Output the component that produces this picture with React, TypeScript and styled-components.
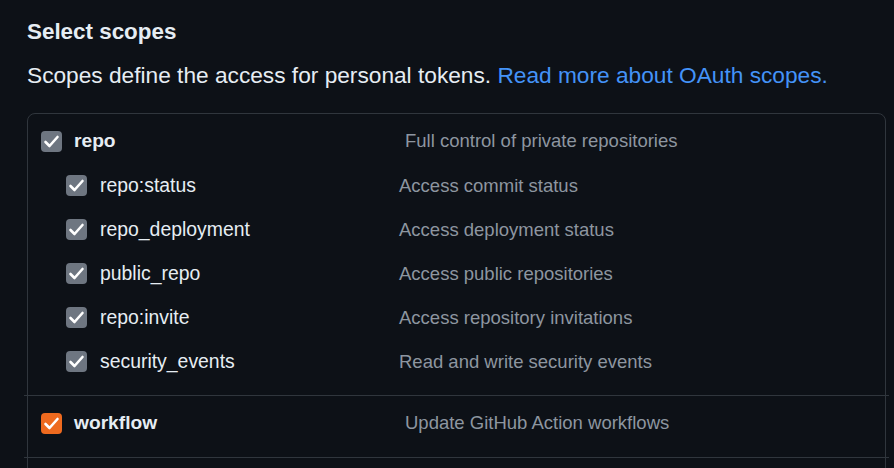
import React from "react";
import styled, { createGlobalStyle } from "styled-components";

const GlobalStyle = createGlobalStyle`
  html, body {
    margin: 0;
    background: #0d1117;
  }
  body {
    font-family: "Liberation Sans", Arial, sans-serif;
    color: #e6edf3;
  }
`;

const Page = styled.div`
  padding: 17px 8px 0 27px;
  height: 468px;
  overflow: hidden;
  box-sizing: border-box;
`;

const Title = styled.h2`
  margin: 0;
  font-size: 22.4px;
  line-height: 30px;
  font-weight: 700;
  color: #e6edf3;
`;

const Intro = styled.p`
  margin: 13px 0 0;
  font-size: 22.7px;
  line-height: 30px;
  color: #e6edf3;
  white-space: nowrap;
`;

const Link = styled.a`
  color: #4493f8;
  text-decoration: none;
`;

const ScopeBox = styled.div`
  margin-top: 23px;
  border: 1px solid #30363d;
  border-radius: 8px;
  padding-bottom: 40px;
`;

const Group = styled.div`
  display: flex;
  flex-direction: column;
  gap: 22px;
  padding: 16px 0 23px 13px;
`;

const Divider = styled.div`
  height: 1px;
  background: #30363d;
  margin: 0 -4px;
`;

const Row = styled.div<{ $nested?: boolean }>`
  display: grid;
  grid-template-columns: ${(p) => (p.$nested ? "333px" : "364px")} 1fr;
  align-items: center;
  height: 22px;
  padding-left: ${(p) => (p.$nested ? "25px" : "0")};
`;

const Label = styled.label<{ $strong?: boolean }>`
  display: flex;
  align-items: center;
  gap: ${(p) => (p.$strong ? "12px" : "13px")};
  font-size: ${(p) => (p.$strong ? "19.2px" : "19.4px")};
  font-weight: ${(p) => (p.$strong ? 700 : 400)};
  color: #e6edf3;
`;

const Box = styled.span<{ $accent?: boolean }>`
  display: inline-flex;
  align-items: center;
  justify-content: center;
  width: 21px;
  height: 21px;
  border-radius: 4px;
  background: ${(p) => (p.$accent ? "#ee6a1f" : "#6e7681")};
  flex-shrink: 0;
`;

const Description = styled.span`
  font-size: 18.5px;
  color: #8d96a0;
`;

const Check = ({ accent }: { accent?: boolean }) => (
  <Box $accent={accent}>
    <svg width="21" height="21" viewBox="0 0 21 21" fill="none">
      <path
        d="M4.5 11 L8.5 15 L16.5 6"
        stroke="#fff"
        strokeWidth="2.6"
        strokeLinecap="round"
        strokeLinejoin="round"
      />
    </svg>
  </Box>
);

type Scope = { name: string; description: string };

const repoScopes: Scope[] = [
  { name: "repo:status", description: "Access commit status" },
  { name: "repo_deployment", description: "Access deployment status" },
  { name: "public_repo", description: "Access public repositories" },
  { name: "repo:invite", description: "Access repository invitations" },
  { name: "security_events", description: "Read and write security events" },
];

export default function App() {
  return (
    <>
      <GlobalStyle />
      <Page>
        <Title>Select scopes</Title>
        <Intro>
          Scopes define the access for personal tokens.{" "}
          <Link href="#">Read more about OAuth scopes.</Link>
        </Intro>
        <ScopeBox>
          <Group>
            <Row>
              <Label $strong>
                <Check />
                repo
              </Label>
              <Description>Full control of private repositories</Description>
            </Row>
            {repoScopes.map((s) => (
              <Row $nested key={s.name}>
                <Label>
                  <Check />
                  {s.name}
                </Label>
                <Description>{s.description}</Description>
              </Row>
            ))}
          </Group>
          <Divider />
          <Group>
            <Row>
              <Label $strong>
                <Check accent />
                workflow
              </Label>
              <Description>Update GitHub Action workflows</Description>
            </Row>
          </Group>
          <Divider />
          <Group>
            <Row />
          </Group>
        </ScopeBox>
      </Page>
    </>
  );
}
